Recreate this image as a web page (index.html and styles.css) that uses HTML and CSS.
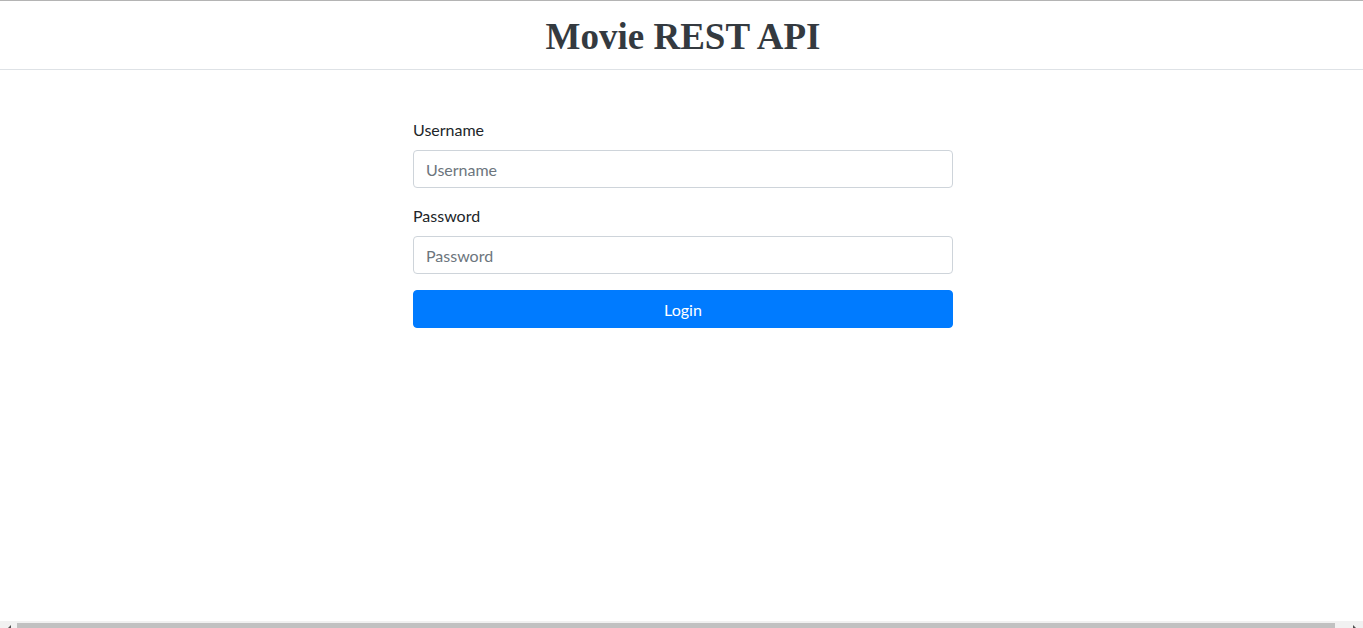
FILE: index.html
```html
<!DOCTYPE html>
<html lang="en">
<head>
<meta charset="utf-8">
<title>Movie REST API</title>
<link rel="stylesheet" href="styles.css">
</head>
<body>
<header class="site-header">
  <h1 class="site-title">Movie REST API</h1>
</header>
<main class="page">
  <form class="login-form">
    <div class="form-group">
      <label class="form-label" for="username">Username</label>
      <input class="form-control" id="username" type="text" placeholder="Username">
    </div>
    <div class="form-group">
      <label class="form-label" for="password">Password</label>
      <input class="form-control" id="password" type="password" placeholder="Password">
    </div>
    <button class="btn-primary" type="button">Login</button>
  </form>
</main>
<div class="fake-scrollbar">
  <span class="arrow arrow-left"></span>
  <div class="thumb"></div>
  <span class="arrow arrow-right"></span>
</div>
</body>
</html>
```
FILE: styles.css
```css
* { box-sizing: border-box; }
html, body { margin: 0; padding: 0; height: 100%; overflow: hidden; }
body {
  font-family: "Lato", "Open Sans", sans-serif;
  font-size: 16px;
  line-height: 1.5;
  color: #212529;
  background: #fff;
  border-top: 1px solid #b4b4b4;
}
.site-header {
  height: 69px;
  border-bottom: 1px solid #dee2e6;
  display: flex;
  align-items: center;
  justify-content: center;
  padding: 5px 0 0 3px;
}
.site-title {
  margin: 0;
  font-family: "Liberation Serif", "DejaVu Serif", serif;
  font-weight: 700;
  font-size: 37px;
  line-height: 1.2;
  color: #343a40;
}
.page {
  display: flex;
  justify-content: center;
  padding: 48px 0 0 3px;
}
.login-form { width: 540px; }
.form-group { margin-bottom: 16px; }
.form-label {
  display: block;
  margin-bottom: 8px;
  line-height: 24px;
}
.form-control {
  display: block;
  width: 100%;
  height: 38px;
  padding: 6px 12px;
  font-family: inherit;
  font-size: 16px;
  color: #495057;
  background: #fff;
  border: 1px solid #ced4da;
  border-radius: 4px;
  outline: none;
}
.form-control::placeholder { color: #6c757d; }
.btn-primary {
  display: block;
  width: 100%;
  height: 38px;
  font-family: inherit;
  font-size: 16px;
  color: #fff;
  background: #007bff;
  border: 1px solid #007bff;
  border-radius: 4px;
}
.fake-scrollbar {
  position: fixed;
  left: 0;
  right: 0;
  bottom: 0;
  height: 7px;
  background: #f1f1f1;
}
.fake-scrollbar .thumb {
  position: absolute;
  left: 17px;
  right: 28px;
  top: 2px;
  bottom: 0;
  background: #c1c1c1;
}
.arrow {
  position: absolute;
  top: 4px;
  width: 0;
  height: 0;
  border-top: 3px solid transparent;
}
.arrow-left { left: 8px; border-right: 3px solid #505050; }
.arrow-right { right: 7px; border-left: 3px solid #505050; }
```
